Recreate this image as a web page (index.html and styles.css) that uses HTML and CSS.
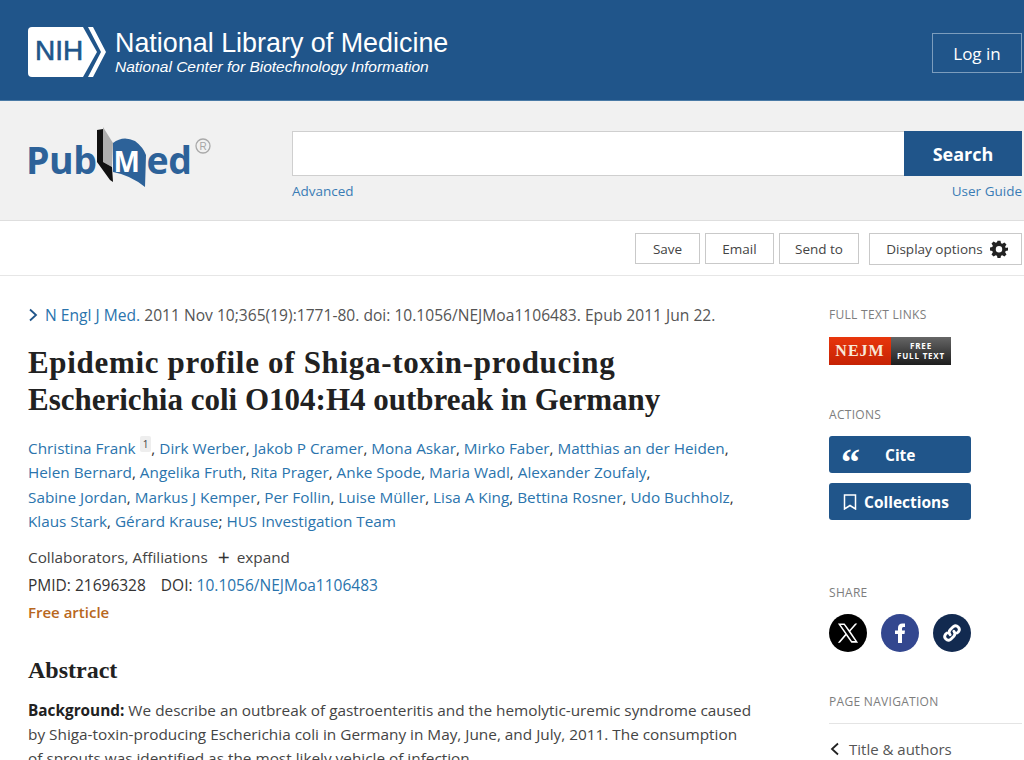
FILE: index.html
```html
<!DOCTYPE html>
<html lang="en">
<head>
<meta charset="utf-8">
<title>Epidemic profile of Shiga-toxin-producing Escherichia coli O104:H4 outbreak in Germany - PubMed</title>
<link rel="stylesheet" href="styles.css">
</head>
<body>
<header class="nih-bar">
  <a class="nih-brand" href="#">
    <svg class="nih-mark" width="80" height="52" viewBox="0 0 80 52" aria-hidden="true">
      <path d="M4 1H55L69 26L55 51H4Q0 51 0 47V5Q0 1 4 1Z" fill="#fff"/>
      <path d="M60 1H65L78 26L65 51H60L73 26Z" fill="#fff"/>
      <text x="7" y="34" class="nih-letters">NIH</text>
    </svg>
    <span class="nih-names">
      <span class="nih-title">National Library of Medicine</span>
      <span class="nih-sub">National Center for Biotechnology Information</span>
    </span>
  </a>
  <a class="login" href="#">Log in</a>
</header>

<section class="search-band">
  <svg class="pubmed-logo" width="186" height="62" viewBox="0 0 186 62" aria-hidden="true">
    <text x="-2" y="47" class="pm-text">Pub</text>
    <path d="M75 0L85 16L84 40L75 35Z" fill="#aeaeae"/>
    <path d="M69 3L75 2L75 35L84 40L85 55L82 53L69 35Z" fill="#111"/>
    <path d="M85 16Q95 8 107 14Q115 20 118 28L117 60Q102 48 85 45Z" fill="#2d6299"/>
    <text x="85.500" y="45" class="pm-m">M</text>
    <text x="118.500" y="47" class="pm-text">ed</text>
    <circle cx="175" cy="19" r="7" fill="none" stroke="#a9a9a9" stroke-width="1.300"/>
    <text x="171.500" y="23" class="pm-r">R</text>
  </svg>
  <form class="search-form">
    <div class="search-row">
      <input class="search-input" type="text" aria-label="Search">
      <button class="search-btn" type="button">Search</button>
    </div>
    <div class="search-links">
      <a href="#">Advanced</a>
      <a href="#">User Guide</a>
    </div>
  </form>
</section>

<nav class="toolbar">
  <button class="tool-btn tool-save" type="button">Save</button>
  <button class="tool-btn tool-email" type="button">Email</button>
  <button class="tool-btn tool-send" type="button">Send to</button>
  <button class="tool-btn tool-display" type="button">Display options
    <svg width="18" height="18" viewBox="0 0 24 24" aria-hidden="true"><path fill="#222" fill-rule="evenodd" d="M10 1h4l.7 3.300 1.700.7 2.800-1.800 2.800 2.800-1.800 2.800.7 1.700L24 10v4l-3.100.7-.7 1.700 1.800 2.800-2.800 2.800-2.800-1.800-1.700.7L14 24h-4l-.7-3.100-1.700-.7-2.800 1.800L2 19.200l1.800-2.800-.7-1.700L0 14v-4l3.100-.7.7-1.700L2 4.800 4.800 2l2.800 1.800 1.700-.7zM12 8a4.300 4.300 0 1 0 0 8.600A4.300 4.300 0 0 0 12 8z"/></svg>
  </button>
</nav>

<div class="page">
  <main class="article">
    <p class="citation">
      <svg class="chev" width="10" height="14" viewBox="0 0 10 14" aria-hidden="true"><path d="M2 1.500L8 7L2 12.500" fill="none" stroke="#20558a" stroke-width="1.800"/></svg>
      <a href="#">N Engl J Med.</a> 2011 Nov 10;365(19):1771-80. doi: 10.1056/NEJMoa1106483. Epub 2011 Jun 22.
    </p>
    <h1 class="title"><span class="title-first">Epidemic profile of Shiga-toxin-producing</span><br>Escherichia coli O104:H4 outbreak in Germany</h1>
    <div class="authors">
      <a href="#">Christina Frank</a> <sup class="aff">1</sup>, <a href="#">Dirk Werber</a>, <a href="#">Jakob P Cramer</a>, <a href="#">Mona Askar</a>, <a href="#">Mirko Faber</a>, <a href="#">Matthias an der Heiden</a>,<br>
      <a href="#">Helen Bernard</a>, <a href="#">Angelika Fruth</a>, <a href="#">Rita Prager</a>, <a href="#">Anke Spode</a>, <a href="#">Maria Wadl</a>, <a href="#">Alexander Zoufaly</a>,<br>
      <a href="#">Sabine Jordan</a>, <a href="#">Markus J Kemper</a>, <a href="#">Per Follin</a>, <a href="#">Luise Müller</a>, <a href="#">Lisa A King</a>, <a href="#">Bettina Rosner</a>, <a href="#">Udo Buchholz</a>,<br>
      <a href="#">Klaus Stark</a>, <a href="#">Gérard Krause</a>; <a href="#">HUS Investigation Team</a>
    </div>
    <p class="meta-expand">Collaborators, Affiliations <span class="plus">+</span> expand</p>
    <p class="ids"><span>PMID: 21696328</span><span>DOI: <a href="#">10.1056/NEJMoa1106483</a></span></p>
    <p class="free">Free article</p>
    <h2 class="abstract-h">Abstract</h2>
    <p class="abstract"><strong>Background:</strong> We describe an outbreak of gastroenteritis and the hemolytic-uremic syndrome caused<br>by Shiga-toxin-producing Escherichia coli in Germany in May, June, and July, 2011. The consumption<br>of sprouts was identified as the most likely vehicle of infection.</p>
  </main>

  <aside class="side">
    <h3 class="side-h">FULL TEXT LINKS</h3>
    <a class="nejm" href="#"><span class="nejm-l">NEJM</span><span class="nejm-r">FREE<br>FULL TEXT</span></a>

    <h3 class="side-h side-actions">ACTIONS</h3>
    <button class="act-btn act-cite" type="button"><span class="quote">“</span><span>Cite</span></button>
    <button class="act-btn act-coll" type="button">
      <svg width="14" height="16" viewBox="0 0 14 16" aria-hidden="true"><path d="M1.500 1h11v14L7 11.500 1.500 15z" fill="none" stroke="#fff" stroke-width="1.500"/></svg>
      <span>Collections</span>
    </button>

    <h3 class="side-h side-share">SHARE</h3>
    <div class="share">
      <a class="circle c-x" href="#" aria-label="X"><svg width="22" height="22" viewBox="0 0 24 24" aria-hidden="true"><path fill="#fff" fill-rule="evenodd" d="M1 1.500h7.300l5.300 7.200 6.200-7.200h2.300l-7.500 8.700 8.400 12.300h-7.300l-5.700-7.900-6.800 7.900H.9l8.100-9.400zM4.100 3.200l12.200 17.600h3.500L7.600 3.200z"/></svg></a>
      <a class="circle c-f" href="#" aria-label="Facebook"><svg width="20" height="22" viewBox="0 0 20 22" aria-hidden="true"><path fill="#fff" d="M8 21v-9H5V8.500h3V6q0-4.500 4.500-4.500H15V5h-1.700Q12 5 12 6.500v2h3l-.5 3.500H12v9z"/></svg></a>
      <a class="circle c-l" href="#" aria-label="Copy link"><svg width="22" height="22" viewBox="0 0 24 24" aria-hidden="true"><g fill="none" stroke="#fff" stroke-width="3.100" stroke-linecap="round"><path d="M10 14a4 4 0 0 1 0-5.500l3.500-3.500a4 4 0 0 1 5.600 5.600L17.500 12"/><path d="M14 10a4 4 0 0 1 0 5.500L10.500 19a4 4 0 0 1-5.600-5.600L6.500 12"/></g></svg></a>
    </div>

    <h3 class="side-h side-nav">PAGE NAVIGATION</h3>
    <div class="nav-item">
      <svg width="10" height="14" viewBox="0 0 10 14" aria-hidden="true"><path d="M8 1.500L2 7l6 5.500" fill="none" stroke="#222" stroke-width="1.800"/></svg>
      <span>Title &amp; authors</span>
    </div>
  </aside>
</div>
</body>
</html>
```

FILE: styles.css
```css
* { box-sizing: border-box; }
html, body { margin: 0; height: 760px; overflow: hidden; }
body { background: #fff; color: #212121; font-family: "Open Sans", "Noto Sans", sans-serif; font-size: 15.300px; }
a { color: #2a74ad; text-decoration: none; }
p, h1, h2, h3 { margin: 0; }

.nih-bar { height: 101px; background: #20558a; border-bottom: 1px solid #4a7aa6; display: flex; align-items: center; justify-content: space-between; padding: 4px 2px 0 28px; }
.nih-brand { display: flex; align-items: center; gap: 7px; color: #fff; }
.nih-mark { display: block; }
.nih-letters { font: 400 28px "Liberation Sans", sans-serif; fill: #20558a; stroke: #20558a; stroke-width: .6px; }
.nih-names { display: flex; flex-direction: column; }
.nih-title { font: 26.900px/30px "Liberation Sans", sans-serif; }
.nih-sub { font: italic 15.500px/18px "Liberation Sans", sans-serif; }
.login { width: 90px; height: 40px; border: 1px solid #7c9dbd; color: #fff; font-size: 17px; display: flex; align-items: center; justify-content: center; margin-top: 2px; }

.search-band { height: 120px; background: #f1f1f1; border-bottom: 1px solid #dedede; display: flex; padding: 26px 2px 0 28px; gap: 78px; }
.pubmed-logo { display: block; flex: none; overflow: visible; }
.pm-text { font: 700 37.500px "Open Sans", sans-serif; fill: #2d6299; letter-spacing: -0.500px; }
.pm-m { font: 700 28px "Open Sans", sans-serif; fill: #fff; }
.pm-r { font: 10px "Liberation Sans", sans-serif; fill: #a6a6a6; }
.search-form { flex: 1; margin-top: 4px; }
.search-row { display: flex; height: 45px; }
.search-input { flex: 1; min-width: 0; height: 45px; background: #fff; border: 1px solid #cfcfcf; border-right: 0; border-radius: 0; }
.search-btn { width: 118px; height: 45px; background: #20558a; color: #fff; border: 0; font: 700 18px "Open Sans", sans-serif; }
.search-links { display: flex; justify-content: space-between; font-size: 13.500px; line-height: 19px; margin-top: 6px; }
.search-links a { color: #3a7cb5; }

.toolbar { height: 55px; border-bottom: 1px solid #e6e6e6; display: flex; justify-content: flex-end; align-items: center; gap: 5px; padding: 1px 2px 0 0; }
.tool-btn { height: 31px; background: #fff; border: 1px solid #c9c9c9; border-radius: 0; color: #444; font: 13.500px "Open Sans", sans-serif; padding: 0; display: flex; align-items: center; justify-content: center; gap: 7px; white-space: nowrap; }
.tool-save { width: 65px; }
.tool-email { width: 69px; }
.tool-send { width: 80px; }
.tool-display { height: 32px; width: 153px; padding: 0 13px 0 16px; margin-left: 5px; }

.page { display: grid; grid-template-columns: 829px 1fr; }
.article { padding: 27px 60px 0 28px; }
.citation { font-size: 15.600px; line-height: 24px; color: #555; white-space: nowrap; }
.chev { vertical-align: -1px; margin-right: 3px; }
.citation a { color: #2a74ad; }
.title { font: 700 31px/37px "Liberation Serif", serif; color: #212121; margin-top: 17px; white-space: nowrap; }
.title-first { letter-spacing: .68px; }
.authors { font-size: 15.300px; line-height: 24.400px; margin-top: 18px; color: #333; white-space: nowrap; }
.aff { font-size: 10px; background: #eee; color: #444; padding: 1px 3px; line-height: 10px; vertical-align: 6px; border-radius: 2px; }
.meta-expand { line-height: 24px; margin-top: 11px; color: #444; }
.plus { font-size: 21px; line-height: 20px; color: #333; vertical-align: -2px; margin: 0 3px 0 6px; }
.ids { font-size: 15.500px; line-height: 24px; margin-top: 4px; color: #333; display: flex; gap: 15px; }
.free { font-size: 15px; line-height: 24px; margin-top: 3px; color: #b8671d; font-weight: 600; }
.abstract-h { font: 700 24px/30px "Liberation Serif", serif; margin-top: 31px; color: #212121; }
.abstract { font-size: 15.350px; line-height: 24.400px; margin-top: 13px; color: #444; white-space: nowrap; }
.abstract strong { color: #212121; }

.side { padding-top: 31px; padding-right: 2px; }
.side-h { font-size: 12px; line-height: 16px; font-weight: 400; color: #7d7d7d; letter-spacing: .3px; }
.nejm { margin-top: 14px; display: flex; width: 122px; height: 28px; color: #fff; }
.nejm-l { width: 62px; background: linear-gradient(#e8360c, #c62204); font: 700 16px/28px "Liberation Serif", serif; letter-spacing: 1px; text-align: center; color: #f8e8d8; }
.nejm-r { width: 60px; background: linear-gradient(#666, #1d1d1d); font: 700 8px/10px "Open Sans", sans-serif; letter-spacing: .8px; text-align: center; padding-top: 4px; }
.side-actions { margin-top: 42px; }
.act-btn { display: flex; align-items: center; width: 142px; height: 37px; background: #20558a; border: 0; border-radius: 3px; color: #fff; font: 700 15.500px "Open Sans", sans-serif; }
.act-cite { margin-top: 13px; padding: 0 0 0 12px; gap: 28px; }
.quote { font: 700 38px/38px "Liberation Serif", serif; height: 24px; width: 16px; }
.act-coll { margin-top: 10px; padding: 0 0 0 14px; gap: 7px; }
.side-share { margin-top: 65px; }
.share { display: flex; gap: 14px; margin-top: 13px; }
.circle { width: 38px; height: 38px; border-radius: 50%; display: flex; align-items: center; justify-content: center; }
.c-x { background: #000; }
.c-f { background: #33478f; }
.c-l { background: #122a50; }
.side-nav { margin-top: 42px; padding-bottom: 13px; border-bottom: 1px solid #e4e4e4; }
.nav-item { display: flex; align-items: center; gap: 9px; margin-top: 13px; font-size: 15px; line-height: 24px; color: #555; padding-left: 1px; }
```
